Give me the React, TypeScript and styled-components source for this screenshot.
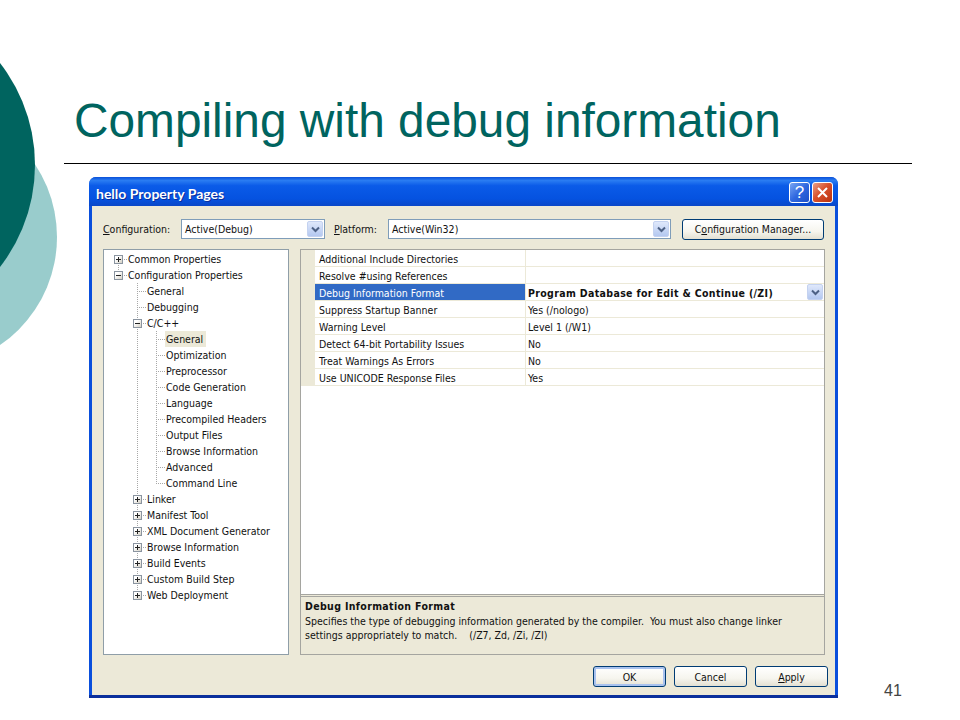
import styled, { createGlobalStyle, css } from "styled-components";

const GlobalStyle = createGlobalStyle`
  html, body {
    margin: 0;
    padding: 0;
    background: #fff;
  }
`;

const Slide = styled.div`
  position: relative;
  width: 960px;
  height: 720px;
  overflow: hidden;
  background: #fff;
  font-family: "Liberation Sans", Arial, sans-serif;
`;

const Decor = styled.svg`
  position: absolute;
  left: 0;
  top: 50px;
`;

const Header = styled.div`
  height: 163px;
  margin-left: 64px;
  width: 848px;
  border-bottom: 1px solid #000;
  display: flex;
  align-items: flex-end;
`;

const Title = styled.h1`
  margin: 0 0 14px 10px;
  font-weight: 400;
  font-size: 47.8px;
  line-height: 56px;
  color: #00645f;
`;

const Content = styled.div`
  display: flex;
  align-items: flex-end;
  margin: 13px 0 0 89px;
`;

const PageNumber = styled.div`
  margin: 0 0 -1px 46px;
  font-size: 16px;
  line-height: 16px;
  color: #444;
`;

const Dialog = styled.div`
  width: 749px;
  height: 521px;
  box-sizing: border-box;
  display: flex;
  flex-direction: column;
  border-radius: 7px 7px 0 0;
  background: #0a4fdc;
  border-bottom: 3px solid #0a2f9c;
  font-family: "DejaVu Sans", Tahoma, sans-serif;
  font-stretch: condensed;
  font-size: 10.5px;
  color: #111;
`;

const TitleBar = styled.div`
  height: 29px;
  box-sizing: border-box;
  flex: none;
  display: flex;
  align-items: center;
  justify-content: space-between;
  padding: 2px 5px 0 7px;
  border-radius: 7px 7px 0 0;
  background: linear-gradient(to bottom, #0a50d8 0%, #2a7cf2 12%, #0b5be8 30%, #0552e0 75%, #0a47c8 100%);
`;

const TitleText = styled.span`
  margin-top: 2px;
  color: #fff;
  font-family: Lato, "DejaVu Sans", sans-serif;
  font-stretch: normal;
  font-size: 14px;
  font-weight: 700;
  text-shadow: 1px 1px 0 #0a2f9c;
`;

const TitleButtons = styled.div`
  display: flex;
  gap: 2px;
`;

const CaptionButton = styled.div<{ $close?: boolean }>`
  width: 19px;
  height: 19px;
  display: flex;
  align-items: center;
  justify-content: center;
  border: 1px solid #fff;
  border-radius: 3px;
  color: #fff;
  font-family: "Liberation Sans", sans-serif;
  font-size: 17px;
  background: ${(p) =>
    p.$close
      ? "linear-gradient(135deg, #e8a08a 0%, #d9512c 45%, #b93210 100%)"
      : "linear-gradient(135deg, #7aa6f2 0%, #2f68e0 50%, #1c4fc8 100%)"};
`;

const Body = styled.div`
  flex: 1;
  margin: 0 3px;
  padding: 13px 7px 0 11px;
  background: #ece9d8;
  display: flex;
  flex-direction: column;
`;

const ConfigRow = styled.div`
  display: flex;
  align-items: center;
  height: 20px;
`;

const Label = styled.span<{ $width: number; $offset?: number }>`
  width: ${(p) => p.$width}px;
  margin-left: ${(p) => p.$offset ?? 0}px;
  flex: none;
`;

const Key = styled.span`
  text-decoration: underline;
`;

const Combo = styled.div<{ $width: number }>`
  width: ${(p) => p.$width}px;
  height: 20px;
  box-sizing: border-box;
  flex: none;
  display: flex;
  align-items: center;
  justify-content: space-between;
  padding: 0 1px 0 3px;
  background: #fff;
  border: 1px solid #7f9db9;
`;

const DropButton = styled.div`
  width: 16px;
  height: 16px;
  display: flex;
  align-items: center;
  justify-content: center;
  border-radius: 2px;
  background: linear-gradient(to bottom, #dfe8fb, #b4c8f0);
  border: 1px solid #c4d2f0;
  box-sizing: border-box;
`;

const Chevron = () => (
  <svg width="9" height="7" viewBox="0 0 9 7">
    <path d="M1 1.5 L4.5 5 L8 1.5" fill="none" stroke="#4d6185" strokeWidth="2" />
  </svg>
);

const Button = styled.div<{ $width: number; $default?: boolean; $offset?: number }>`
  width: ${(p) => p.$width}px;
  height: 21px;
  margin-left: ${(p) => p.$offset ?? 0}px;
  box-sizing: border-box;
  flex: none;
  display: flex;
  align-items: center;
  justify-content: center;
  border: 1px solid #003c74;
  border-radius: 3px;
  background: linear-gradient(to bottom, #fff 0%, #f6f5ee 60%, #e3e0d2 100%);
  ${(p) =>
    p.$default &&
    css`
      box-shadow: inset 0 0 0 2px #a9c2ee;
    `}
`;

const Panels = styled.div`
  display: flex;
  gap: 11px;
  height: 406px;
  margin-top: 10px;
  flex: none;
`;

const Tree = styled.div`
  width: 186px;
  box-sizing: border-box;
  flex: none;
  background: #fff;
  border: 1px solid #8f9ea8;
  padding: 1px 0 0 5px;
`;

const TreeRow = styled.div`
  display: flex;
  height: 16px;
  align-items: center;
`;

const dots = "repeating-linear-gradient(to bottom, #a8a8a8 0 1px, transparent 1px 2px)";
const dotsH = "repeating-linear-gradient(to right, #a8a8a8 0 1px, transparent 1px 2px)";

type Vertical = "none" | "full" | "up" | "down";

const verticalSize: Record<Vertical, string> = {
  none: "0 0",
  full: "1px 16px",
  up: "1px 8px",
  down: "1px 8px",
};

const Cell = styled.div<{ $v: Vertical; $h?: boolean }>`
  width: 19px;
  height: 16px;
  flex: none;
  display: flex;
  align-items: center;
  justify-content: center;
  background-image: ${dots}, ${(p) => (p.$h ? dotsH : "none")};
  background-repeat: no-repeat;
  background-size: ${(p) => verticalSize[p.$v]}, 10px 1px;
  background-position: 9px ${(p) => (p.$v === "down" ? "8px" : "0")}, 9px 8px;
`;

const Expander = styled.div`
  width: 9px;
  height: 9px;
  box-sizing: border-box;
  display: flex;
  border: 1px solid #8a94a0;
  background: linear-gradient(135deg, #fff 30%, #d4d0c4 100%);
`;

const TreeLabel = styled.span<{ $selected?: boolean }>`
  margin-left: -1px;
  padding: 0 3px 0 1px;
  line-height: 16px;
  white-space: nowrap;
  background: ${(p) => (p.$selected ? "#ece9d8" : "transparent")};
`;

const Sign = ({ open }: { open: boolean }) => (
  <svg width="7" height="7" viewBox="0 0 7 7">
    <path d={open ? "M1 3.5 H6" : "M1 3.5 H6 M3.5 1 V6"} stroke="#222" strokeWidth="1" />
  </svg>
);

type Node = {
  label: string;
  cells: Vertical[];
  sign?: "+" | "-";
  selected?: boolean;
};

const leaf = (label: string, col1: Vertical, col2: Vertical = "full"): Node => ({
  label,
  cells: ["none", col1, col2],
});

const treeNodes: Node[] = [
  { label: "Common Properties", cells: ["down"], sign: "+" },
  { label: "Configuration Properties", cells: ["up"], sign: "-" },
  { label: "General", cells: ["none", "full"] },
  { label: "Debugging", cells: ["none", "full"] },
  { label: "C/C++", cells: ["none", "full"], sign: "-" },
  { ...leaf("General", "full"), selected: true },
  leaf("Optimization", "full"),
  leaf("Preprocessor", "full"),
  leaf("Code Generation", "full"),
  leaf("Language", "full"),
  leaf("Precompiled Headers", "full"),
  leaf("Output Files", "full"),
  leaf("Browse Information", "full"),
  leaf("Advanced", "full"),
  leaf("Command Line", "full", "up"),
  { label: "Linker", cells: ["none", "full"], sign: "+" },
  { label: "Manifest Tool", cells: ["none", "full"], sign: "+" },
  { label: "XML Document Generator", cells: ["none", "full"], sign: "+" },
  { label: "Browse Information", cells: ["none", "full"], sign: "+" },
  { label: "Build Events", cells: ["none", "full"], sign: "+" },
  { label: "Custom Build Step", cells: ["none", "full"], sign: "+" },
  { label: "Web Deployment", cells: ["none", "up"], sign: "+" },
];

const GridPanel = styled.div`
  width: 525px;
  box-sizing: border-box;
  flex: none;
  display: flex;
  flex-direction: column;
  border: 1px solid #a5a5a0;
  background: #fff;
`;

const Grid = styled.div`
  flex: 1;
  display: flex;
  flex-direction: column;
`;

const GridRow = styled.div`
  display: flex;
  height: 17px;
  box-sizing: border-box;
  border-left: 14px solid #ece9d8;
  border-bottom: 1px solid #ece9d8;
`;

const NameCell = styled.div<{ $selected?: boolean }>`
  width: 211px;
  box-sizing: border-box;
  flex: none;
  padding-left: 4px;
  line-height: 18px;
  border-right: 1px solid #ece9d8;
  color: ${(p) => (p.$selected ? "#fff" : "inherit")};
  background: ${(p) => (p.$selected ? "#316ac5" : "transparent")};
`;

const ValueCell = styled.div<{ $selected?: boolean }>`
  flex: 1;
  display: flex;
  justify-content: space-between;
  padding: 0 1px 0 2px;
  line-height: 18px;
  ${(p) =>
    p.$selected &&
    css`
      font-weight: 700;
      letter-spacing: 0.35px;
    `}
`;

const Description = styled.div`
  height: 60px;
  box-sizing: border-box;
  flex: none;
  padding: 2px 4px;
  background: #ece9d8;
  border-top: 3px double #a5a5a0;
  line-height: 14px;
`;

const DescriptionTitle = styled.div`
  font-weight: 700;
  letter-spacing: 0.35px;
  margin-bottom: 1px;
`;

const Footer = styled.div`
  display: flex;
  justify-content: flex-end;
  gap: 8px;
  margin-top: 11px;
`;

const gridRows = [
  { name: "Additional Include Directories", value: "" },
  { name: "Resolve #using References", value: "" },
  { name: "Debug Information Format", value: "Program Database for Edit & Continue (/ZI)", selected: true },
  { name: "Suppress Startup Banner", value: "Yes (/nologo)" },
  { name: "Warning Level", value: "Level 1 (/W1)" },
  { name: "Detect 64-bit Portability Issues", value: "No" },
  { name: "Treat Warnings As Errors", value: "No" },
  { name: "Use UNICODE Response Files", value: "Yes" },
];

export default function App() {
  return (
    <Slide>
      <GlobalStyle />
      <Decor width="60" height="310" viewBox="0 50 60 310">
        <circle cx="-74" cy="237" r="131" fill="#99cccc" />
        <circle cx="-131" cy="165" r="166" fill="#00645f" />
      </Decor>
      <Header>
        <Title>Compiling with debug information</Title>
      </Header>
      <Content>
        <Dialog>
          <TitleBar>
            <TitleText>hello Property Pages</TitleText>
            <TitleButtons>
              <CaptionButton>?</CaptionButton>
              <CaptionButton $close>
                <svg width="11" height="11" viewBox="0 0 11 11">
                  <path d="M1 1 L10 10 M10 1 L1 10" stroke="#fff" strokeWidth="2" />
                </svg>
              </CaptionButton>
            </TitleButtons>
          </TitleBar>
          <Body>
            <ConfigRow>
              <Label $width={78}>
                <Key>C</Key>onfiguration:
              </Label>
              <Combo $width={144}>
                Active(Debug)
                <DropButton>
                  <Chevron />
                </DropButton>
              </Combo>
              <Label $width={54} $offset={9}>
                <Key>P</Key>latform:
              </Label>
              <Combo $width={283}>
                Active(Win32)
                <DropButton>
                  <Chevron />
                </DropButton>
              </Combo>
              <Button $width={142} $offset={11}>
                <span>
                  C<Key>o</Key>nfiguration Manager...
                </span>
              </Button>
            </ConfigRow>
            <Panels>
              <Tree>
                {treeNodes.map((node, i) => (
                  <TreeRow key={i}>
                    {node.cells.map((v, c) => {
                      const isLast = c === node.cells.length - 1;
                      return (
                        <Cell key={c} $v={v} $h={isLast}>
                          {isLast && node.sign && (
                            <Expander>
                              <Sign open={node.sign === "-"} />
                            </Expander>
                          )}
                        </Cell>
                      );
                    })}
                    <TreeLabel $selected={node.selected}>{node.label}</TreeLabel>
                  </TreeRow>
                ))}
              </Tree>
              <GridPanel>
                <Grid>
                  {gridRows.map((row) => (
                    <GridRow key={row.name}>
                      <NameCell $selected={row.selected}>{row.name}</NameCell>
                      <ValueCell $selected={row.selected}>
                        {row.value}
                        {row.selected && (
                          <DropButton>
                            <Chevron />
                          </DropButton>
                        )}
                      </ValueCell>
                    </GridRow>
                  ))}
                </Grid>
                <Description>
                  <DescriptionTitle>Debug Information Format</DescriptionTitle>
                  Specifies the type of debugging information generated by the compiler.&nbsp; You must also change linker
                  <br />
                  settings appropriately to match.&nbsp;&nbsp;&nbsp; (/Z7, Zd, /Zi, /ZI)
                </Description>
              </GridPanel>
            </Panels>
            <Footer>
              <Button $width={73} $default>
                OK
              </Button>
              <Button $width={73}>Cancel</Button>
              <Button $width={73}>
                <span>
                  <Key>A</Key>pply
                </span>
              </Button>
            </Footer>
          </Body>
        </Dialog>
        <PageNumber>41</PageNumber>
      </Content>
    </Slide>
  );
}
